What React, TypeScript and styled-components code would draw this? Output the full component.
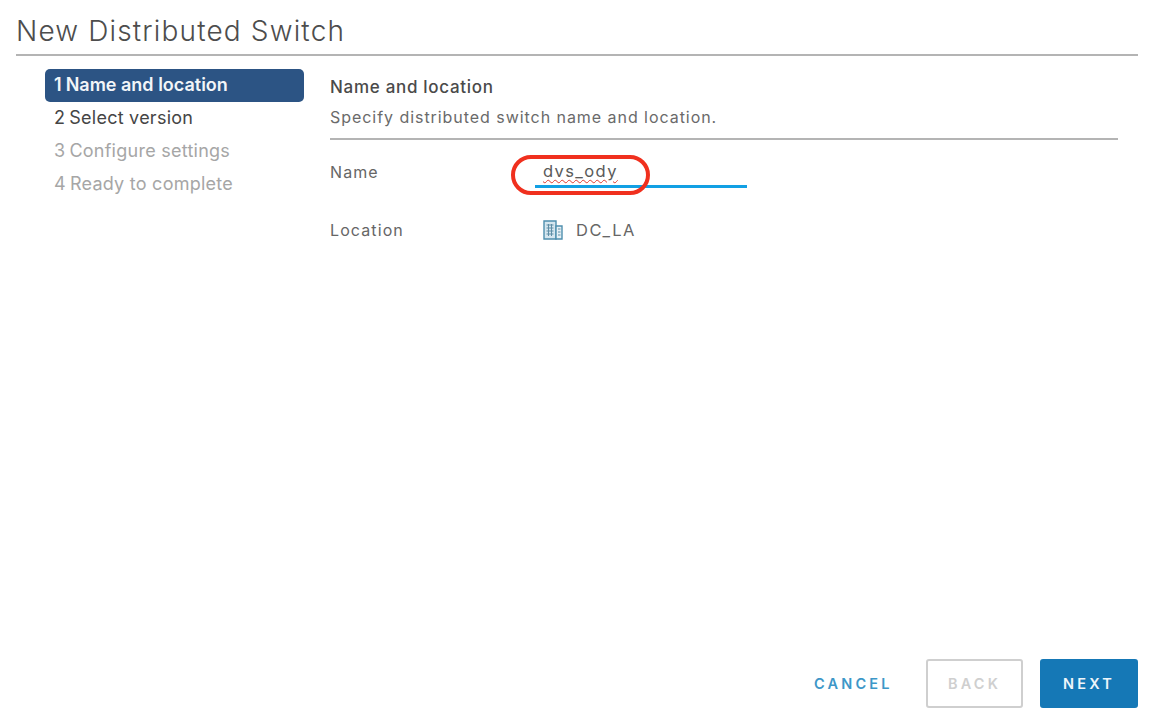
import React from 'react'
import styled, { createGlobalStyle } from 'styled-components'

const GlobalStyle = createGlobalStyle`
  html, body {
    margin: 0;
    padding: 0;
    height: 100%;
    background: #fff;
    font-family: Inter, "Liberation Sans", sans-serif;
  }
  #root {
    height: 100%;
  }
`

const Dialog = styled.div`
  width: 1158px;
  height: 724px;
  box-sizing: border-box;
  padding: 12px 20px 16px 16px;
  display: flex;
  flex-direction: column;
`

const Title = styled.h1`
  margin: 0;
  height: 44px;
  box-sizing: border-box;
  padding-top: 1px;
  border-bottom: 2px solid #b4b4b4;
  font-size: 28px;
  line-height: 37px;
  font-weight: 300;
  letter-spacing: 1.15px;
  color: #4d4d4d;
`

const Body = styled.div`
  flex: 1;
  display: flex;
  padding: 13px 20px 0 29px;
`

const Steps = styled.ol`
  list-style: none;
  margin: 0;
  padding: 0;
  width: 259px;
  flex-shrink: 0;
  display: flex;
  flex-direction: column;
`

const Step = styled.li<{ $state: 'active' | 'enabled' | 'disabled' }>`
  height: 33px;
  box-sizing: border-box;
  padding: 0 0 3px 9px;
  border-radius: 5px;
  display: flex;
  align-items: center;
  gap: 4px;
  font-size: 18px;
  letter-spacing: ${({ $state }) => ($state === 'active' ? '0' : '0.25px')};
  font-weight: ${({ $state }) => ($state === 'active' ? 600 : 400)};
  background: ${({ $state }) => ($state === 'active' ? '#2c5484' : 'transparent')};
  color: ${({ $state }) =>
    $state === 'active' ? '#f2f5f8' : $state === 'enabled' ? '#454545' : '#a6a6a6'};
`

const Content = styled.section`
  flex: 1;
  margin-left: 26px;
`

const Header = styled.div`
  height: 71px;
  padding-top: 7px;
  box-sizing: border-box;
  border-bottom: 2px solid #b4b4b4;
`

const Heading = styled.h2`
  margin: 0;
  font-size: 17px;
  line-height: 22px;
  font-weight: 500;
  letter-spacing: 0.7px;
  color: #4a4a4a;
`

const Description = styled.p`
  margin: 9px 0 0;
  font-size: 16px;
  line-height: 20px;
  letter-spacing: 0.95px;
  color: #6a6a6a;
`

const Form = styled.div`
  display: grid;
  grid-template-columns: 205px 1fr;
  grid-auto-rows: 58px;
  padding-top: 3px;
`

const Label = styled.div`
  display: flex;
  align-items: center;
  height: 58px;
  font-size: 16px;
  letter-spacing: 1.1px;
  color: #666;
`

const Field = styled.div`
  display: flex;
  align-items: center;
  height: 58px;
`

const NameInput = styled.div`
  position: relative;
  width: 212px;
  height: 30px;
  box-sizing: border-box;
  padding: 1px 0 0 8px;
  margin-top: 2px;
  border-bottom: 3px solid #12a0e4;
  font-size: 16.5px;
  line-height: 24px;
  letter-spacing: 1.4px;
  color: #5a5a5a;
`

const Spelled = styled.span`
  text-decoration: underline wavy #e0392f 1px;
  text-underline-offset: 2px;
`

const Highlight = styled.div`
  position: absolute;
  left: -24px;
  top: -3px;
  width: 139px;
  height: 40px;
  box-sizing: border-box;
  border: 4px solid #f0301e;
  border-radius: 20px;
`

const LocationValue = styled.div`
  display: flex;
  align-items: center;
  gap: 12px;
  padding-left: 7px;
  font-size: 16.5px;
  letter-spacing: 1.6px;
  color: #666;
`

const Footer = styled.div`
  display: flex;
  align-items: center;
  justify-content: flex-end;
`

const Button = styled.button<{ $kind: 'link' | 'outline' | 'primary' }>`
  height: 49px;
  box-sizing: border-box;
  border-radius: 3px;
  font-family: inherit;
  font-size: 14.5px;
  font-weight: 600;
  letter-spacing: 3.2px;
  text-transform: uppercase;
  padding: 0;
  margin-left: ${({ $kind }) => ($kind === 'primary' ? '17px' : $kind === 'outline' ? '35px' : '0')};
  width: ${({ $kind }) => ($kind === 'link' ? '77px' : $kind === 'outline' ? '97px' : '98px')};
  border: ${({ $kind }) =>
    $kind === 'outline' ? '2px solid #cfcfcf' : $kind === 'primary' ? '2px solid #1578b6' : '0'};
  background: ${({ $kind }) => ($kind === 'primary' ? '#1578b6' : 'transparent')};
  color: ${({ $kind }) =>
    $kind === 'primary' ? '#eef5fa' : $kind === 'outline' ? '#cfcfcf' : '#3d97c8'};
`

const DatacenterIcon = () => (
  <svg width="22" height="22" viewBox="0 0 22 22" fill="none">
    <path d="M2 2h12v18H2z" fill="#d5e6ef" stroke="#4f8fae" strokeWidth="1.4" />
    <path d="M14 7h6v13h-6z" fill="#e6f0f5" stroke="#4f8fae" strokeWidth="1.4" />
    <path
      d="M4.5 6h7M4.5 9h7M4.5 12h7M4.5 15h7M6.5 5v12M9.5 5v12M16 10h2.5M16 13h2.5M16 16h2.5"
      stroke="#5f8ea6"
      strokeWidth="1"
    />
  </svg>
)

const steps = [
  { label: 'Name and location', state: 'active' as const },
  { label: 'Select version', state: 'enabled' as const },
  { label: 'Configure settings', state: 'disabled' as const },
  { label: 'Ready to complete', state: 'disabled' as const },
]

export default function App() {
  return (
    <>
      <GlobalStyle />
      <Dialog>
        <Title>New Distributed Switch</Title>
        <Body>
          <Steps>
            {steps.map((step, i) => (
              <Step key={step.label} $state={step.state}>
                <span>{i + 1}</span>
                <span>{step.label}</span>
              </Step>
            ))}
          </Steps>
          <Content>
            <Header>
              <Heading>Name and location</Heading>
              <Description>Specify distributed switch name and location.</Description>
            </Header>
            <Form>
              <Label>Name</Label>
              <Field>
                <NameInput>
                  <Spelled>dvs_ody</Spelled>
                  <Highlight />
                </NameInput>
              </Field>
              <Label>Location</Label>
              <Field>
                <LocationValue>
                  <DatacenterIcon />
                  DC_LA
                </LocationValue>
              </Field>
            </Form>
          </Content>
        </Body>
        <Footer>
          <Button $kind="link">Cancel</Button>
          <Button $kind="outline" disabled>Back</Button>
          <Button $kind="primary">Next</Button>
        </Footer>
      </Dialog>
    </>
  )
}
